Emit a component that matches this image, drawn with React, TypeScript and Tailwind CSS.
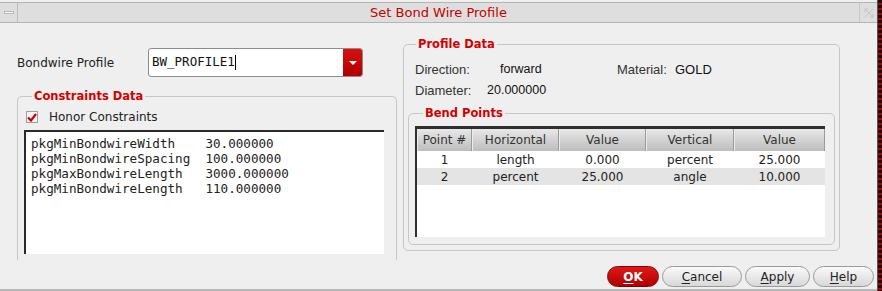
import React from "react";

const sans = "font-['DejaVu_Sans',sans-serif]";
const helv = "font-['Liberation_Sans',Arial,sans-serif]";
const mono = "font-['DejaVu_Sans_Mono',monospace]";

const constraints = [
  ["pkgMinBondwireWidth", "30.000000"],
  ["pkgMinBondwireSpacing", "100.000000"],
  ["pkgMaxBondwireLength", "3000.000000"],
  ["pkgMinBondwireLength", "110.000000"],
];

const cols = [
  { label: "Point #", w: "w-[55px]" },
  { label: "Horizontal", w: "w-[87px]" },
  { label: "Value", w: "w-[87px]" },
  { label: "Vertical", w: "w-[88px]" },
  { label: "Value", w: "flex-1" },
];

const rows = [
  ["1", "length", "0.000", "percent", "25.000"],
  ["2", "percent", "25.000", "angle", "10.000"],
];

function Group({ title, className, children }: { title: string; className?: string; children: React.ReactNode }) {
  return (
    <fieldset className={`border border-[#c6c6c6] rounded-[5px] ${className ?? ""}`}>
      <legend className={`ml-[8px] px-[2px] text-[11.5px] leading-[16px] font-bold text-[#d40000] ${sans}`}>{title}</legend>
      {children}
    </fieldset>
  );
}

function Button({ u, rest, primary, w }: { u: string; rest: string; primary?: boolean; w: string }) {
  return (
    <button
      className={`${w} h-[21px] rounded-full text-[12px] leading-none ${sans} ${
        primary
          ? "bg-gradient-to-b from-[#e01818] to-[#b00000] border border-[#8a0000] text-white font-bold"
          : "bg-gradient-to-b from-[#fafafa] to-[#d8d8d8] border border-[#9a9a9a] text-[#222]"
      }`}
    >
      <span className="underline underline-offset-2">{u}</span>
      {rest}
    </button>
  );
}

export default function App() {
  return (
    <div className="w-[882px] h-[291px] bg-[#efefef] flex overflow-hidden">
      <div className="flex-1 flex flex-col border-r border-[#555] min-w-0">
        {/* Title bar */}
        <div className="h-[21px] mt-[2px] flex bg-[#dedede] border-t border-b border-[#b4b4b4] shrink-0">
          <div className="w-[18px] border-r border-[#bcbcbc] flex items-center justify-center">
            <div className="w-[10px] h-[3px] bg-[#f8f8f8] border border-[#b8b8b8]" />
          </div>
          <div className={`flex-1 flex items-center justify-center text-[13px] text-[#c40000] ${sans}`}>
            Set Bond Wire Profile
          </div>
          <div className="w-[18px] border-l border-[#c6c6c6] flex items-center justify-center">
            <svg width="10" height="10" viewBox="0 0 10 10" fill="none" stroke="#c4c4c4" strokeWidth="1">
              <path d="M1 1 L9 9 M9 1 L1 9 M1 1 H4 M1 1 V4 M9 9 H6 M9 9 V6" />
            </svg>
          </div>
        </div>

        {/* Body */}
        <div className="flex-1 flex min-h-0">
          {/* Left column */}
          <div className="w-[403px] pl-[17px] pt-[25px] flex flex-col">
            <div className="flex items-center h-[29px]">
              <span className={`w-[131px] text-[12px] text-[#222] ${sans}`}>Bondwire Profile</span>
              <div className="w-[215px] h-[29px] flex bg-white border border-[#8c8c8c] rounded-[3px] overflow-hidden">
                <div className={`flex-1 flex items-center pl-[3px] text-[12.5px] text-[#111] ${mono}`}>
                  BW_PROFILE1<span className="w-px h-[15px] bg-black" />
                </div>
                <div className="w-[19px] bg-gradient-to-b from-[#d81010] to-[#b00000] flex items-center justify-center">
                  <div className="w-0 h-0 border-l-[4px] border-r-[4px] border-t-[4px] border-l-transparent border-r-transparent border-t-white" />
                </div>
              </div>
            </div>

            <Group title="Constraints Data" className="mt-[11px] w-[380px] h-[172px] shrink-0 border-b-0 rounded-b-none pl-[6px] pr-[12px]">
              <div className="flex items-center mt-[6px] h-[14px] pl-[2px]">
                <div className="w-[12px] h-[12px] border border-[#a0a0a0] bg-[#f4f4f4] flex items-center justify-center">
                  <svg width="10" height="9" viewBox="0 0 10 9">
                    <path d="M1 4.5 L4 7.5 L9 1" stroke="#d00000" strokeWidth="2.2" fill="none" />
                  </svg>
                </div>
                <span className={`ml-[11px] text-[12px] text-[#222] ${sans}`}>Honor Constraints</span>
              </div>
              <div className="mt-[6px] h-[124px] bg-white border-t-2 border-l-2 border-[#2a2a2a] pt-[4px] pl-[5px]">
                {constraints.map(([k, v]) => (
                  <div key={k} className={`whitespace-pre text-[12.6px] leading-[15px] text-[#222] ${mono}`}>
                    {k.padEnd(23, " ")}
                    {v}
                  </div>
                ))}
              </div>
            </Group>
          </div>

          {/* Right column */}
          <div className="flex-1 pt-[13px]">
            <Group title="Profile Data" className="w-[437px] h-[215px] px-[4px]">
              <div className="flex items-center h-[21px] pl-[7px] mt-[7px]">
                <span className={`w-[85px] text-[13px] text-[#333] ${helv}`}>Direction:</span>
                <span className={`w-[117px] text-[12.5px] text-[#111] ${helv}`}>forward</span>
                <span className={`w-[58px] text-[13px] text-[#333] ${helv}`}>Material:</span>
                <span className={`text-[13px] text-[#111] ${helv}`}>GOLD</span>
              </div>
              <div className="flex items-center h-[21px] pl-[7px] mb-[4px]">
                <span className={`w-[72px] text-[13px] text-[#333] ${helv}`}>Diameter:</span>
                <span className={`text-[12.5px] text-[#111] ${helv}`}>20.000000</span>
              </div>
              <Group title="Bend Points" className="h-[140px] pl-[6px] pr-[9px]">
                <div className="mt-[5px] h-[111px] bg-white border-t-[3px] border-l-2 border-[#2e2e2e] flex flex-col">
                  <div className="flex h-[22px] bg-gradient-to-b from-[#e8e8e8] to-[#bdbdbd]">
                    {cols.map((c, i) => (
                      <div
                        key={i}
                        className={`${c.w} flex items-center justify-center border-r border-[#9a9a9a] border-l border-l-[#ececec] text-[12px] text-[#333] ${sans}`}
                      >
                        {c.label}
                      </div>
                    ))}
                  </div>
                  {rows.map((r, ri) => (
                    <div key={ri} className={`flex h-[17px] ${ri % 2 ? "bg-[#e4e4e4]" : "bg-white"}`}>
                      {r.map((cell, ci) => (
                        <div
                          key={ci}
                          className={`${cols[ci].w} flex items-center justify-center text-[12px] text-[#222] ${sans}`}
                        >
                          {cell}
                        </div>
                      ))}
                    </div>
                  ))}
                </div>
              </Group>
            </Group>
          </div>
        </div>

        {/* Buttons */}
        <div className="h-[34px] shrink-0 flex items-start justify-end gap-[3px] pr-[3px] pt-[9px] border-b-2 border-[#b8b8b8]">
          <Button primary u="O" rest="K" w="w-[52px]" />
          <Button u="C" rest="ancel" w="w-[80px]" />
          <Button u="A" rest="pply" w="w-[65px]" />
          <Button u="H" rest="elp" w="w-[61px]" />
        </div>
      </div>
      <div className="w-[4px] bg-[repeating-linear-gradient(180deg,#111_0px,#111_3px,#b00000_3px,#b00000_5px)]" />
    </div>
  );
}
